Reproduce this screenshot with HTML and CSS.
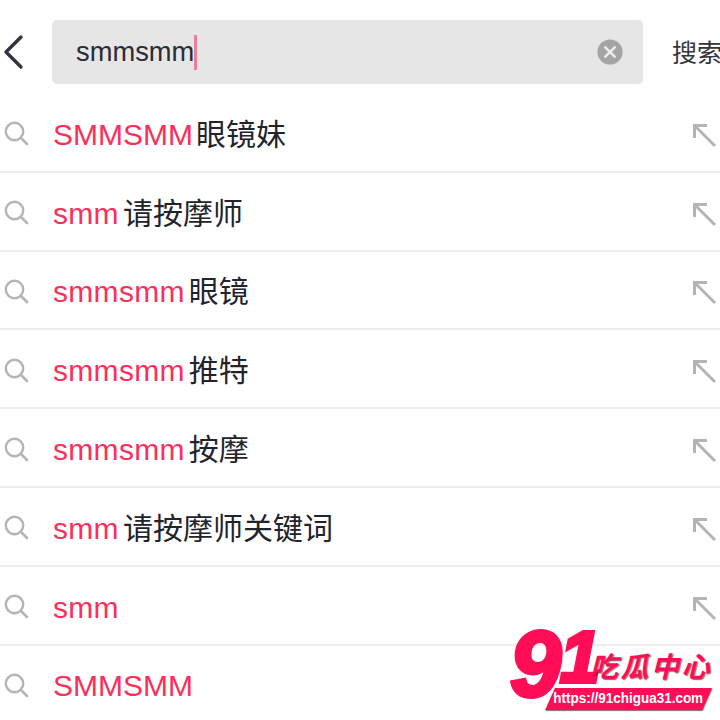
FILE: index.html
```html
<!DOCTYPE html>
<html lang="zh-CN">
<head>
    <meta charset="UTF-8">
    <meta name="viewport" content="width=device-width, initial-scale=1.0">
    <title>搜索</title>
    <link rel="stylesheet" href="styles.css">
</head>
<body>
    <svg class="icon-defs" width="0" height="0" aria-hidden="true">
        <symbol id="icon-search" viewBox="0 0 26 26">
            <circle cx="11.5" cy="11.5" r="8.7" fill="none" stroke="currentColor" stroke-width="2.4"/>
            <path d="M18 18l6 6" fill="none" stroke="currentColor" stroke-width="2.6" stroke-linecap="round"/>
        </symbol>
        <symbol id="icon-fill" viewBox="0 0 26 26">
            <path d="M2.5 15V2.5H15M2.5 2.5L23 23" fill="none" stroke="currentColor" stroke-width="3"/>
        </symbol>
    </svg>

    <header class="search-bar">
        <svg class="back-icon" viewBox="0 0 22 36" aria-hidden="true">
            <path d="M19 3L4 18l15 15" fill="none" stroke="currentColor" stroke-width="3.4" stroke-linecap="round" stroke-linejoin="round"/>
        </svg>
        <div class="search-box">
            <span class="search-text">smmsmm</span><span class="caret"></span>
            <svg class="clear-icon" viewBox="0 0 26 26" aria-hidden="true">
                <circle cx="13" cy="13" r="12.6" fill="#a4a4a6"/>
                <path d="M8.3 8.3l9.4 9.4M17.7 8.3l-9.4 9.4" fill="none" stroke="#ececec" stroke-width="2.6" stroke-linecap="round"/>
            </svg>
        </div>
        <span class="search-button">搜索</span>
    </header>

    <ul class="suggestions">
        <li class="suggestion">
            <svg class="search-icon"><use href="#icon-search"/></svg>
            <span class="label label-caps"><em>SMMSMM</em>眼镜妹</span>
            <svg class="fill-icon"><use href="#icon-fill"/></svg>
        </li>
        <li class="suggestion">
            <svg class="search-icon"><use href="#icon-search"/></svg>
            <span class="label"><em>smm</em>请按摩师</span>
            <svg class="fill-icon"><use href="#icon-fill"/></svg>
        </li>
        <li class="suggestion">
            <svg class="search-icon"><use href="#icon-search"/></svg>
            <span class="label"><em>smmsmm</em>眼镜</span>
            <svg class="fill-icon"><use href="#icon-fill"/></svg>
        </li>
        <li class="suggestion">
            <svg class="search-icon"><use href="#icon-search"/></svg>
            <span class="label"><em>smmsmm</em>推特</span>
            <svg class="fill-icon"><use href="#icon-fill"/></svg>
        </li>
        <li class="suggestion">
            <svg class="search-icon"><use href="#icon-search"/></svg>
            <span class="label"><em>smmsmm</em>按摩</span>
            <svg class="fill-icon"><use href="#icon-fill"/></svg>
        </li>
        <li class="suggestion">
            <svg class="search-icon"><use href="#icon-search"/></svg>
            <span class="label"><em>smm</em>请按摩师关键词</span>
            <svg class="fill-icon"><use href="#icon-fill"/></svg>
        </li>
        <li class="suggestion">
            <svg class="search-icon"><use href="#icon-search"/></svg>
            <span class="label"><em>smm</em></span>
            <svg class="fill-icon"><use href="#icon-fill"/></svg>
        </li>
        <li class="suggestion">
            <svg class="search-icon"><use href="#icon-search"/></svg>
            <span class="label label-caps"><em>SMMSMM</em></span>
        </li>
    </ul>

    <!-- Watermark -->
    <div class="watermark">
        <span class="mark-nine">9</span>
        <span class="mark-one">1</span>
        <span class="mark-name">吃瓜中心</span>
        <span class="mark-url"><span>https://91chigua31.com</span></span>
    </div>
</body>
</html>
```

FILE: styles.css
```css
html, body {
    height: 100%;
}
body {
    margin: 0;
    background: #ffffff;
    color: #22232b;
    font-family: "Liberation Sans", "Noto Sans CJK SC", sans-serif;
    overflow: hidden;
    position: relative;
}
.icon-defs {
    position: absolute;
}

/* Search bar */
.search-bar {
    display: flex;
    align-items: center;
    height: 64px;
    padding: 20px 0 10px 0;
}
.back-icon {
    width: 22px;
    height: 36px;
    margin-left: 2px;
    margin-right: 28px;
    color: #33343c;
    flex-shrink: 0;
}
.search-box {
    display: flex;
    align-items: center;
    width: 591px;
    height: 64px;
    box-sizing: border-box;
    padding: 0 20px 0 24px;
    background: #e6e6e7;
    border-radius: 5px;
    flex-shrink: 0;
}
.search-text {
    font-size: 27.3px;
    line-height: 36px;
    color: #2b2c34;
}
.caret {
    width: 3px;
    height: 35px;
    background: #ee7f9c;
}
.clear-icon {
    width: 26px;
    height: 26px;
    margin-left: auto;
}
.search-button {
    margin-left: 29px;
    margin-bottom: 2px;
    font-size: 25px;
    color: #33343c;
    white-space: nowrap;
}

/* Suggestion list */
.suggestions {
    list-style: none;
    margin: 0;
    padding: 0;
}
.suggestion {
    display: flex;
    align-items: center;
    height: 78.8px;
    box-sizing: border-box;
    border-bottom: 2px solid #ededed;
}
.search-icon {
    width: 26px;
    height: 26px;
    margin-top: 2px;
    margin-left: 3px;
    margin-right: 24px;
    color: #b4b4b4;
    flex-shrink: 0;
}
.label {
    margin-top: 5px;
    font-size: 30px;
    line-height: 40px;
    white-space: nowrap;
}
.label em {
    font-style: normal;
    color: #fb2f5b;
    letter-spacing: 0.3px;
    margin-right: 4px;
}
.label-caps em {
    letter-spacing: 0;
    margin-right: 3px;
}
.fill-icon {
    width: 26px;
    height: 26px;
    margin-top: 7px;
    margin-left: auto;
    margin-right: 2px;
    color: #b4b4b4;
    flex-shrink: 0;
}

/* Watermark */
.watermark {
    position: absolute;
    left: 510px;
    top: 626px;
    width: 210px;
    height: 94px;
    color: #ff0d57;
}
.mark-nine, .mark-one {
    position: absolute;
    font-weight: bold;
    font-style: italic;
    line-height: 1;
    -webkit-text-stroke: 4px #ff0d57;
}
.mark-nine {
    left: 0;
    top: -8px;
    font-size: 92px;
}
.mark-one {
    left: 50px;
    top: -5px;
    font-size: 72px;
}
.mark-name {
    position: absolute;
    left: 80px;
    top: 26px;
    font-size: 28px;
    font-weight: bold;
    font-style: italic;
    letter-spacing: 2.5px;
    line-height: 32px;
    white-space: nowrap;
    text-shadow: 1px 1px 1px rgba(60, 0, 20, 0.6);
}
.mark-url {
    position: absolute;
    left: 40px;
    top: 62px;
    width: 157px;
    height: 22px;
    background: #ff0d57;
    transform: skewX(-24deg);
    box-shadow: 1px 1px 1px rgba(60, 0, 20, 0.6);
}
.mark-url span {
    display: block;
    transform: skewX(24deg) scaleX(0.93);
    transform-origin: left center;
    padding-left: 3px;
    color: #ffffff;
    font-size: 14.5px;
    font-weight: bold;
    line-height: 20px;
    white-space: nowrap;
}
```
